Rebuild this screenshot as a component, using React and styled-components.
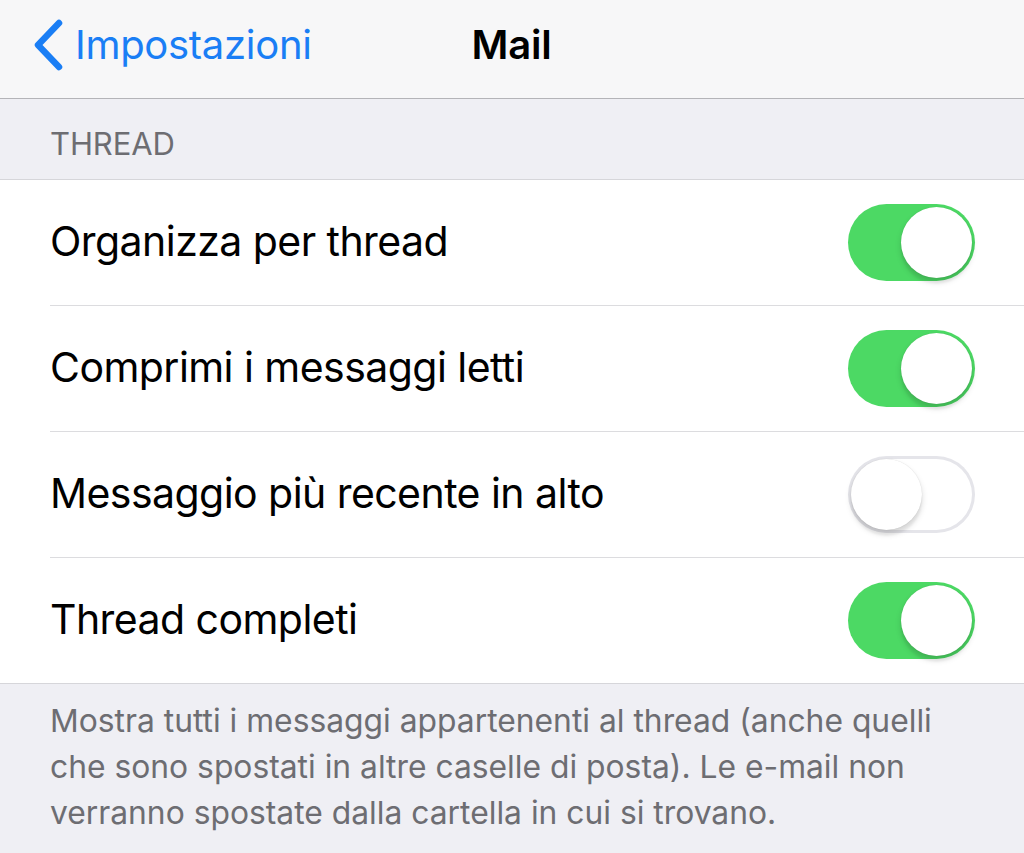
import { useState } from "react";
import styled, { createGlobalStyle } from "styled-components";

const GlobalStyle = createGlobalStyle`
  html, body {
    margin: 0;
    padding: 0;
    background: #efeff4;
  }
  body {
    font-family: Inter, "Noto Sans", "Liberation Sans", sans-serif;
    -webkit-font-smoothing: antialiased;
  }
`;

const Screen = styled.div`
  width: 1024px;
  min-height: 853px;
  background: #efeff4;
  display: flex;
  flex-direction: column;
`;

const NavBar = styled.header`
  height: 99px;
  box-sizing: border-box;
  background: #f7f7f8;
  border-bottom: 1px solid #b4b4b8;
  display: grid;
  grid-template-columns: 1fr auto 1fr;
  align-items: center;
  padding: 0 0 9px 33px;
`;

const BackButton = styled.button`
  display: flex;
  align-items: center;
  gap: 12px;
  background: none;
  border: 0;
  padding: 0;
  color: #1a7ef5;
  font: inherit;
  font-size: 40px;
  letter-spacing: -0.3px;
  cursor: pointer;
  justify-self: start;
  svg {
    flex: none;
  }
`;

const Title = styled.h1`
  margin: 0;
  font-size: 40px;
  font-weight: 600;
  letter-spacing: -0.2px;
  color: #000;
  transform: translateX(-17px);
`;

const SectionHeader = styled.div`
  height: 81px;
  box-sizing: border-box;
  padding: 26px 50px 0;
  font-size: 31px;
  color: #6d6d72;
  letter-spacing: -0.1px;
  border-bottom: 1px solid #d6d6da;
`;

const Group = styled.div`
  background: #fff;
`;

const Row = styled.div`
  height: 126px;
  box-sizing: border-box;
  padding-right: 49px;
  display: flex;
  align-items: center;
  justify-content: space-between;
  border-bottom: 1px solid ${({ last }) => (last ? "#d6d6da" : "#dcdcdf")};
  margin-left: ${({ last }) => (last ? "0" : "50px")};
  padding-left: ${({ last }) => (last ? "50px" : "0")};
`;

const Label = styled.span`
  font-size: 41px;
  color: #000;
  letter-spacing: -0.55px;
  padding-bottom: 3px;
`;

const Track = styled.button`
  position: relative;
  width: 127px;
  height: 77px;
  border-radius: 39px;
  border: 0;
  padding: 0;
  flex: none;
  cursor: pointer;
  background: ${({ on }) => (on ? "#4cd964" : "#fff")};
  box-shadow: ${({ on }) => (on ? "none" : "inset 0 0 0 3px #e5e5ea")};
`;

const Knob = styled.span`
  position: absolute;
  top: 3px;
  left: ${({ on }) => (on ? "53px" : "3px")};
  width: 71px;
  height: 71px;
  border-radius: 50%;
  background: #fff;
  box-shadow: 0 4px 6px rgba(0, 0, 0, 0.15), 0 0 1px rgba(0, 0, 0, 0.16),
    0 6px 2px rgba(0, 0, 0, 0.04);
`;

const Footer = styled.p`
  margin: 0;
  padding: 14px 50px 0;
  font-size: 31.8px;
  line-height: 46px;
  color: #6d6d72;
  letter-spacing: 0;
`;

const Toggle = ({ defaultOn }) => {
  const [on, setOn] = useState(defaultOn);
  return (
    <Track on={on ? 1 : 0} onClick={() => setOn(!on)}>
      <Knob on={on ? 1 : 0} />
    </Track>
  );
};

const rows = [
  { label: "Organizza per thread", on: true },
  { label: "Comprimi i messaggi letti", on: true },
  { label: "Messaggio più recente in alto", on: false },
  { label: "Thread completi", on: true },
];

const App = () => (
  <Screen>
    <GlobalStyle />
    <NavBar>
      <BackButton>
        <svg width="30" height="52" viewBox="0 0 30 52">
          <path
            d="M26 4 L5 26 L26 48"
            fill="none"
            stroke="#1a7ef5"
            strokeWidth="6.5"
            strokeLinecap="round"
            strokeLinejoin="round"
          />
        </svg>
        Impostazioni
      </BackButton>
      <Title>Mail</Title>
      <span />
    </NavBar>
    <SectionHeader>THREAD</SectionHeader>
    <Group>
      {rows.map((r, i) => (
        <Row key={r.label} last={i === rows.length - 1 ? 1 : 0}>
          <Label>{r.label}</Label>
          <Toggle defaultOn={r.on} />
        </Row>
      ))}
    </Group>
    <Footer>
      Mostra tutti i messaggi appartenenti al thread (anche quelli
      <br />
      che sono spostati in altre caselle di posta). Le e-mail non
      <br />
      verranno spostate dalla cartella in cui si trovano.
    </Footer>
  </Screen>
);

export default App;
